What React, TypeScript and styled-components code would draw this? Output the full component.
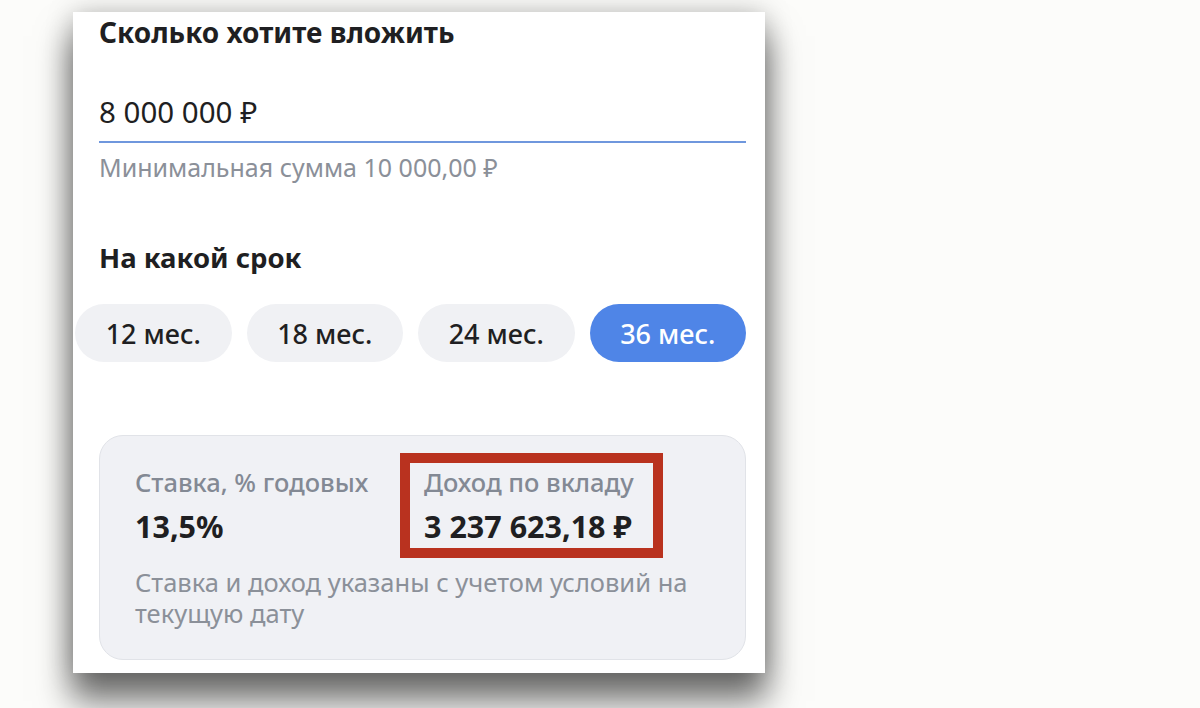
import React from "react";
import styled, { createGlobalStyle } from "styled-components";

const Global = createGlobalStyle`
  html, body { margin: 0; padding: 0; background: #fcfcfa; }
  body { font-family: "Noto Sans", "Open Sans", sans-serif; color: #1f1f22; overflow: hidden; }
  * { box-sizing: border-box; }
`;

const Page = styled.div`
  width: 1200px;
  height: 708px;
  padding: 12px 0 0 73px;
  background: #fcfcfa;
  overflow: hidden;
`;

const Card = styled.div`
  width: 692px;
  height: 661px;
  background: #ffffff;
  padding: 2px 19px 0 26px;
  display: flex;
  flex-direction: column;
  box-shadow: 0 26px 32px 2px rgba(0, 0, 0, 0.55), 0 0 26px rgba(0, 0, 0, 0.22);
`;

const Title = styled.h2`
  margin: 0;
  font-size: 28px;
  line-height: 36px;
  font-weight: 700;
  color: #1f1f22;
`;

const Field = styled.div`
  margin-top: 44px;
  border-bottom: 2px solid #6f97dd;
  padding-bottom: 11px;
`;

const FieldValue = styled.div`
  font-size: 29.5px;
  line-height: 36px;
  font-weight: 400;
  color: #1f1f22;
`;

const Hint = styled.div`
  margin-top: 8px;
  font-size: 25px;
  line-height: 32px;
  color: #8b9099;
`;

const SectionTitle = styled(Title)`
  margin-top: 57px;
  font-size: 27.5px;
`;

const Pills = styled.div`
  display: flex;
  gap: 15px;
  margin: 28px 0 0 -24px;
`;

const Pill = styled.button<{ $active?: boolean }>`
  flex: 1;
  height: 58px;
  border: none;
  border-radius: 29px;
  background: ${(p) => (p.$active ? "#4f85e7" : "#f0f1f4")};
  color: ${(p) => (p.$active ? "#ffffff" : "#1f1f22")};
  font-family: inherit;
  font-size: 27px;
  font-weight: 500;
  padding: 0;
`;

const StatsBox = styled.div`
  margin-top: 73px;
  height: 225px;
  background: #f0f1f5;
  border: 1px solid #e1e3e8;
  border-radius: 24px;
  padding: 30px 36px 0 35px;
  display: flex;
  flex-direction: column;
`;

const StatsRow = styled.div`
  display: grid;
  grid-template-columns: 289px 1fr;
`;

const Stat = styled.div`
  position: relative;
  display: flex;
  flex-direction: column;
`;

const StatLabel = styled.div`
  font-size: 25.5px;
  line-height: 32px;
  font-weight: 500;
  color: #838994;
`;

const StatValue = styled.div`
  margin-top: 10px;
  font-size: 30.5px;
  line-height: 36px;
  font-weight: 700;
  color: #1f1f22;
`;

const Highlight = styled.div`
  position: absolute;
  left: -24px;
  top: -13px;
  width: 263px;
  height: 105px;
  border: 10px solid #b9321f;
  pointer-events: none;
`;

const Note = styled.div`
  margin-top: 23px;
  font-size: 25.5px;
  line-height: 31px;
  color: #8b9099;
  max-width: 580px;
`;

const terms = ["12 мес.", "18 мес.", "24 мес.", "36 мес."];

export default function App() {
  return (
    <>
      <Global />
      <Page>
        <Card>
          <Title>Сколько хотите вложить</Title>
          <Field>
            <FieldValue>8 000 000 ₽</FieldValue>
          </Field>
          <Hint>Минимальная сумма 10 000,00 ₽</Hint>
          <SectionTitle>На какой срок</SectionTitle>
          <Pills>
            {terms.map((t) => (
              <Pill key={t} $active={t === "36 мес."}>
                {t}
              </Pill>
            ))}
          </Pills>
          <StatsBox>
            <StatsRow>
              <Stat>
                <StatLabel>Ставка, % годовых</StatLabel>
                <StatValue>13,5%</StatValue>
              </Stat>
              <Stat>
                <Highlight />
                <StatLabel>Доход по вкладу</StatLabel>
                <StatValue>3 237 623,18 ₽</StatValue>
              </Stat>
            </StatsRow>
            <Note>Ставка и доход указаны с учетом условий на текущую дату</Note>
          </StatsBox>
        </Card>
      </Page>
    </>
  );
}
